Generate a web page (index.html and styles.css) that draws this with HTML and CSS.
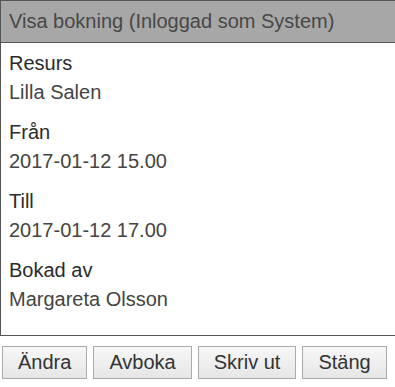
FILE: index.html
```html
<!DOCTYPE html>
<html lang="sv">
<head>
    <meta charset="UTF-8">
    <meta name="viewport" content="width=device-width, initial-scale=1.0">
    <title>Visa bokning</title>
    <link rel="stylesheet" href="styles.css">
</head>
<body>
    <div class="dialog">
        <div class="dialog-title">Visa bokning (Inloggad som System)</div>
        <div class="dialog-body">
            <div class="field">
                <div class="label">Resurs</div>
                <div class="value">Lilla Salen</div>
            </div>
            <div class="field">
                <div class="label">Från</div>
                <div class="value">2017-01-12 15.00</div>
            </div>
            <div class="field">
                <div class="label">Till</div>
                <div class="value">2017-01-12 17.00</div>
            </div>
            <div class="field">
                <div class="label">Bokad av</div>
                <div class="value">Margareta Olsson</div>
            </div>
        </div>
    </div>
    <div class="actions">
        <button class="btn">Ändra</button>
        <button class="btn">Avboka</button>
        <button class="btn">Skriv ut</button>
        <button class="btn">Stäng</button>
    </div>
</body>
</html>
```

FILE: styles.css
```css
* {
    margin: 0;
    padding: 0;
    box-sizing: border-box;
}

html, body {
    overflow: hidden;
}

body {
    font-family: 'Liberation Sans', Arial, sans-serif;
    font-size: 20px;
    color: #444444;
    background: #ffffff;
}

/* right edge of the dialog sits just outside the window */
.dialog {
    border: 1px solid #555555;
    margin-right: -4px;
}

.dialog-title {
    background-color: #a7a7a7;
    border-bottom: 1px solid #555555;
    height: 42px;
    line-height: 40px;
    padding: 0 8px;
    color: #484848;
}

.dialog-body {
    padding: 6px 8px 10px;
}

.field {
    margin-bottom: 11px;
    line-height: 29px;
}

.label {
    color: #2b2b2b;
}

.value {
    color: #444444;
}

.actions {
    display: flex;
    gap: 6px;
    padding: 10px 2px;
}

.btn {
    font-family: inherit;
    font-size: 20px;
    color: #333333;
    height: 33px;
    padding: 0 15px;
    border: 1px solid #aaaaaa;
    background: linear-gradient(#f7f7f7, #e6e6e6);
    cursor: pointer;
}
```
